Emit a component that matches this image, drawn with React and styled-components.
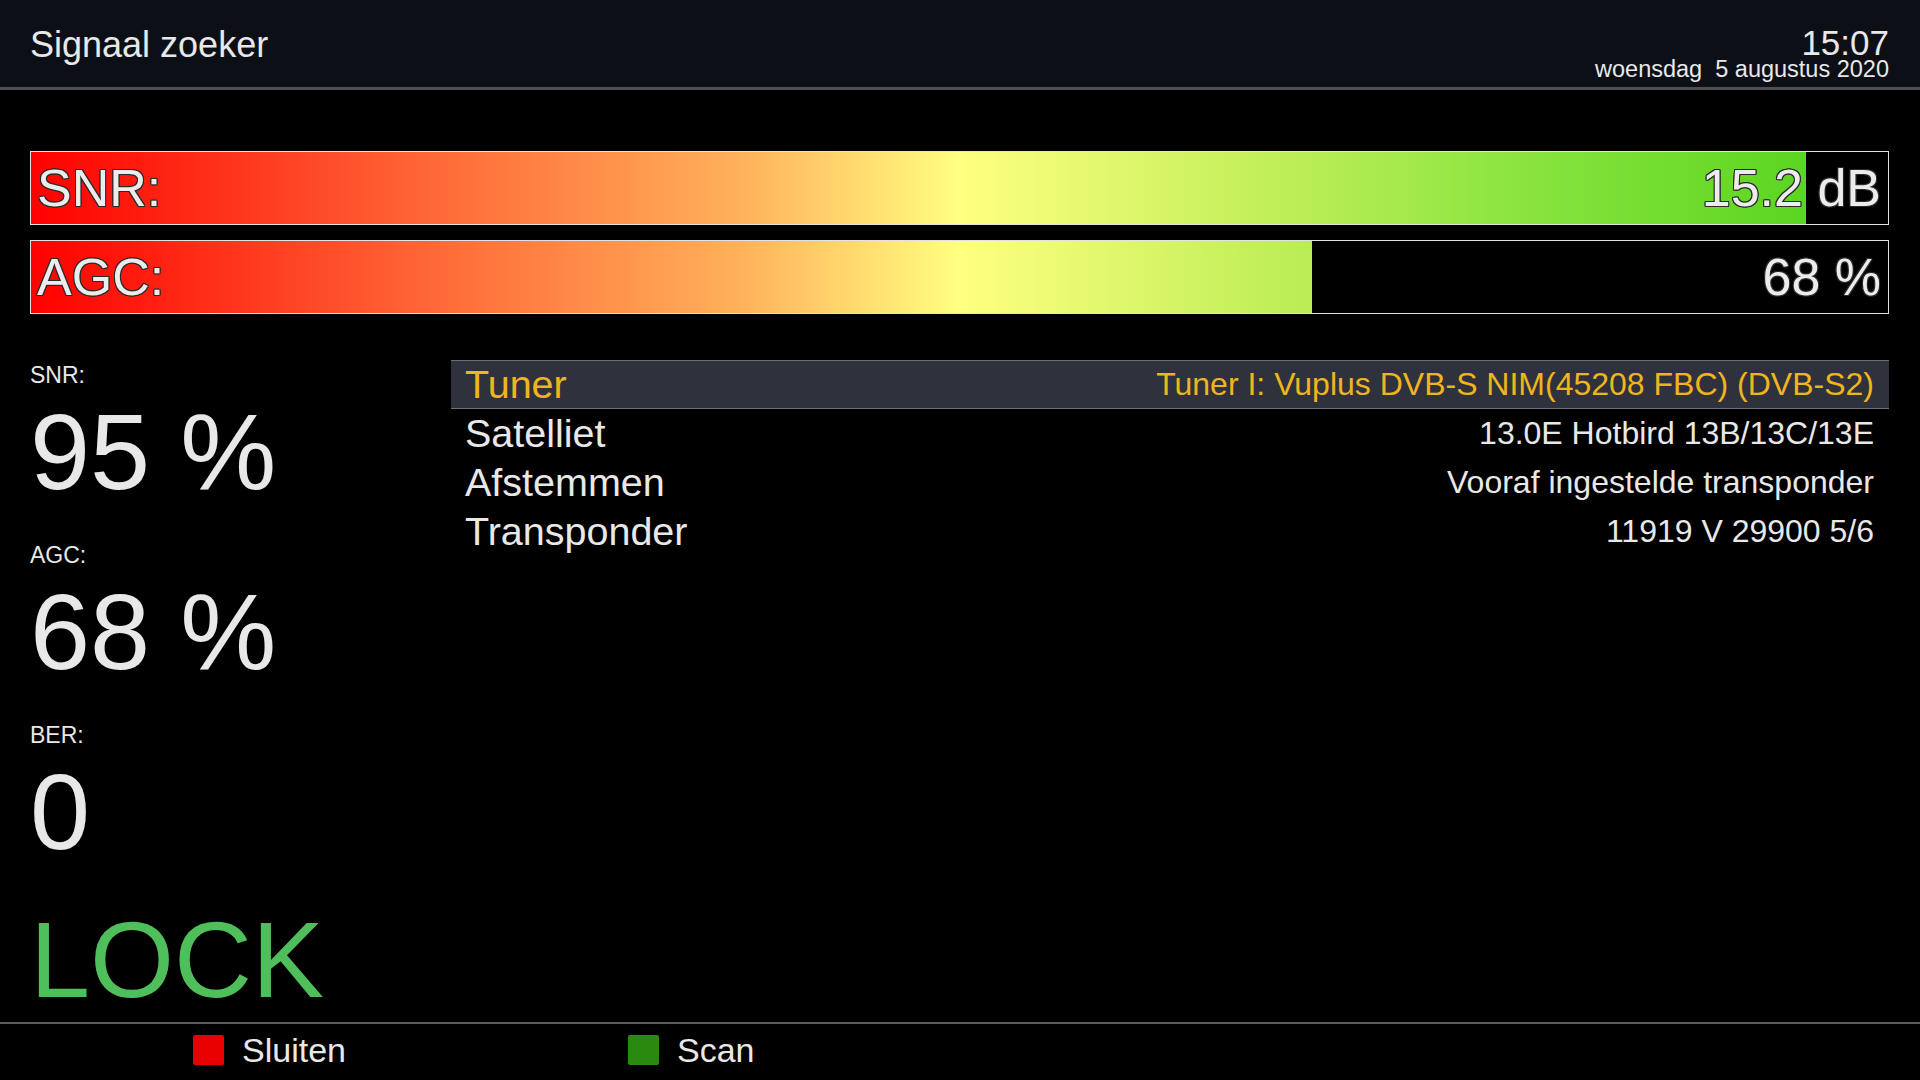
import React from 'react'
import styled, { createGlobalStyle } from 'styled-components'

const GlobalStyle = createGlobalStyle`
    html, body {
        margin: 0;
        padding: 0;
        background: #000;
        overflow: hidden;
    }
    body {
        font-family: "Liberation Sans", Arial, sans-serif;
        color: #e8e8e8;
    }
`

const Screen = styled.div`
    width: 1920px;
    height: 1080px;
    display: flex;
    flex-direction: column;
    background: #000;
`

const Header = styled.header`
    height: 87px;
    display: flex;
    justify-content: space-between;
    align-items: center;
    padding: 0 31px 0 30px;
    background: #0d0f17;
    border-bottom: 3px solid #4e4e53;
`

const Title = styled.div`
    font-size: 36px;
    line-height: 36px;
    padding-top: 2px;
`

const Clock = styled.div`
    align-self: flex-end;
    padding-bottom: 7px;
    display: flex;
    flex-direction: column;
    align-items: flex-end;
`

const Time = styled.div`
    font-size: 35px;
    line-height: 31px;
`

const DateLine = styled.div`
    font-size: 23.5px;
    line-height: 22px;
    white-space: pre;
`

const Bars = styled.section`
    display: flex;
    flex-direction: column;
    gap: 15px;
    padding: 61px 31px 0 30px;
`

const Track = styled.div`
    display: grid;
    height: 74px;
    box-sizing: border-box;
    border: 1px solid #e2e2e2;
    background: #000;
`

const Fill = styled.div`
    grid-area: 1 / 1;
    height: 100%;
    background: linear-gradient(
        to right,
        #ff0000 0%,
        #ff6a38 22%,
        #ffb05a 38%,
        #ffff80 50%,
        #bcee55 68%,
        #8ee640 79%,
        #4ed01a 100%
    );
    background-repeat: no-repeat;
`

const BarText = styled.div`
    grid-area: 1 / 1;
    display: flex;
    justify-content: space-between;
    align-items: center;
    padding: 0 7px 0 6px;
    font-size: 52px;
    color: #ececec;
    text-shadow:
        -1px -1px 0 #2a2a2a, 1px -1px 0 #2a2a2a,
        -1px 1px 0 #2a2a2a, 1px 1px 0 #2a2a2a,
        0 -1px 0 #2a2a2a, 0 1px 0 #2a2a2a,
        -1px 0 0 #2a2a2a, 1px 0 0 #2a2a2a;
`

const Middle = styled.section`
    flex: 1;
    display: grid;
    grid-template-columns: 421px 1438px;
    padding: 46px 0 0 30px;
`

const Stats = styled.div`
    display: flex;
    flex-direction: column;
    padding-top: 2px;
`

const Stat = styled.div`
    display: flex;
    flex-direction: column;
    gap: 8px;
    margin-bottom: 35px;
`

const StatLabel = styled.div`
    font-size: 23px;
    line-height: 27px;
`

const StatValue = styled.div`
    font-size: 108px;
    line-height: 110px;
`

const Lock = styled(StatValue)`
    color: #4fbf5b;
    margin-top: 3px;
`

const InfoList = styled.div`
    display: flex;
    flex-direction: column;
`

const InfoRow = styled.div`
    height: 49px;
    box-sizing: border-box;
    display: flex;
    justify-content: space-between;
    align-items: center;
    padding: 0 15px 0 14px;
    background: ${p => (p.$selected ? '#2f313c' : 'transparent')};
    border-top: 1px solid ${p => (p.$selected ? '#6c6e78' : 'transparent')};
    border-bottom: 1px solid ${p => (p.$selected ? '#6c6e78' : 'transparent')};
    color: ${p => (p.$selected ? '#efb51c' : '#e8e8e8')};
`

const InfoKey = styled.span`
    font-size: 39.5px;
`

const InfoValue = styled.span`
    font-size: 32px;
`

const Footer = styled.footer`
    height: 58px;
    box-sizing: border-box;
    display: flex;
    align-items: center;
    padding: 0 0 4px 193px;
    border-top: 2px solid #5a5a60;
`

const Key = styled.div`
    width: 435px;
    display: flex;
    align-items: center;
    gap: 18px;
    font-size: 34px;
    line-height: 34px;
`

const KeySquare = styled.span`
    width: 31px;
    height: 30px;
    border-radius: 2px;
    background: ${p => p.$color};
`

const info = [
    ['Tuner', 'Tuner I: Vuplus DVB-S NIM(45208 FBC) (DVB-S2)'],
    ['Satelliet', '13.0E Hotbird 13B/13C/13E'],
    ['Afstemmen', 'Vooraf ingestelde transponder'],
    ['Transponder', '11919 V 29900 5/6'],
]

const stats = [
    ['SNR:', '95 %'],
    ['AGC:', '68 %'],
    ['BER:', '0'],
]

const SignalBar = ({ label, value, percent }) => (
    <Track>
        <Fill style={{ width: `${percent}%`, backgroundSize: `${10000 / percent}% 100%` }} />
        <BarText>
            <span>{label}</span>
            <span>{value}</span>
        </BarText>
    </Track>
)

export default function App() {
    return (
        <Screen>
            <GlobalStyle />
            <Header>
                <Title>Signaal zoeker</Title>
                <Clock>
                    <Time>15:07</Time>
                    <DateLine>woensdag  5 augustus 2020</DateLine>
                </Clock>
            </Header>

            <Bars>
                <SignalBar label="SNR:" value="15.2 dB" percent={95.6} />
                <SignalBar label="AGC:" value="68 %" percent={69} />
            </Bars>

            <Middle>
                <Stats>
                    {stats.map(([label, value]) => (
                        <Stat key={label}>
                            <StatLabel>{label}</StatLabel>
                            <StatValue>{value}</StatValue>
                        </Stat>
                    ))}
                    <Lock>LOCK</Lock>
                </Stats>
                <InfoList>
                    {info.map(([key, value], index) => (
                        <InfoRow key={key} $selected={index === 0}>
                            <InfoKey>{key}</InfoKey>
                            <InfoValue>{value}</InfoValue>
                        </InfoRow>
                    ))}
                </InfoList>
            </Middle>

            <Footer>
                <Key>
                    <KeySquare $color="#e80000" />
                    Sluiten
                </Key>
                <Key>
                    <KeySquare $color="#2a8a10" />
                    Scan
                </Key>
            </Footer>
        </Screen>
    )
}
